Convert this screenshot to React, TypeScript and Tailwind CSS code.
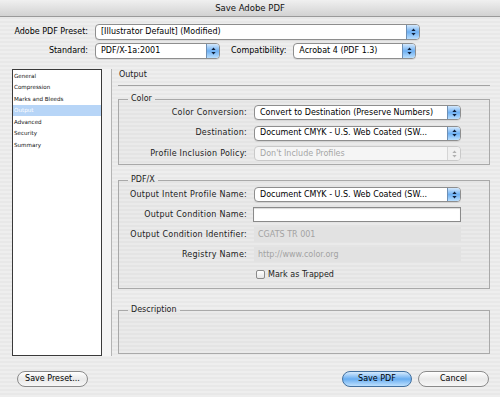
import React from 'react';

function Arrows({ muted }: { muted?: boolean }) {
  return (
    <svg width="5" height="8" viewBox="0 0 5 8" className={muted ? 'text-[#b0b0b0]' : 'text-[#10203a]'}>
      <path d="M2.5 0.5 L4.6 3 L0.4 3 Z" fill="currentColor" />
      <path d="M2.5 7.5 L4.6 5 L0.4 5 Z" fill="currentColor" />
    </svg>
  );
}

function Select({ value, className, disabled }: { value: string; className: string; disabled?: boolean }) {
  return (
    <div
      className={`flex items-stretch rounded-[4px] border ${
        disabled ? 'border-[#c9c9c9] bg-[#f5f5f5] text-[#a6a6a6]' : 'border-[#8e8e8e] bg-white text-black shadow-[0_1px_0_rgba(0,0,0,0.08)]'
      } ${className}`}
    >
      <span className="flex-1 truncate pl-[5px] flex items-center">{value}</span>
      <span
        className={`flex w-[13px] items-center justify-center rounded-r-[3px] border-l ${
          disabled
            ? 'border-[#d5d5d5] bg-[#f0f0f0]'
            : 'border-[#6e8fb4] bg-gradient-to-b from-[#d3e8fc] via-[#6eb0f2] to-[#b9defd]'
        }`}
      >
        <Arrows muted={disabled} />
      </span>
    </div>
  );
}

function Row({ label, children }: { label: string; children: React.ReactNode }) {
  return (
    <div className="flex h-[15px] items-center">
      <div className="w-[128px] text-right tracking-[0.25px] text-[#222]">{label}</div>
      <div className="ml-[7px] flex h-full items-stretch">{children}</div>
    </div>
  );
}

function Group({ title, children, className }: { title: string; children?: React.ReactNode; className: string }) {
  return (
    <fieldset className={`border border-[#a9a9a9] bg-black/[0.015] ${className}`}>
      <legend className="ml-[9px] px-[3px] leading-[10px] text-[#222]">{title}</legend>
      {children}
    </fieldset>
  );
}

const items = ['General', 'Compression', 'Marks and Bleeds', 'Output', 'Advanced', 'Security', 'Summary'];

export default function App() {
  return (
    <div className="flex h-[397px] w-[500px] flex-col overflow-hidden bg-[repeating-linear-gradient(0deg,#eeeeee_0px,#eeeeee_2px,#e8e8e8_2px,#e8e8e8_4px)] font-['DejaVu_Sans',sans-serif] text-[8px] text-black">
      {/* title bar */}
      <div className="flex h-[17px] items-center justify-center border-b border-[#9a9a9a] bg-gradient-to-b from-[#f0f0f0] to-[#d2d2d2] text-[8.5px] text-[#111]">
        Save Adobe PDF
      </div>

      {/* preset rows */}
      <div className="mt-[7px] flex h-[16px] items-center">
        <div className="w-[88px] text-right">Adobe PDF Preset:</div>
        <Select value="[Illustrator Default] (Modified)" className="ml-[7px] h-full w-[325px]" />
      </div>
      <div className="mt-[3px] flex h-[16px] items-center">
        <div className="w-[88px] text-right">Standard:</div>
        <Select value="PDF/X-1a:2001" className="ml-[7px] h-full w-[125px]" />
        <div className="ml-[11px]">Compatibility:</div>
        <Select value="Acrobat 4 (PDF 1.3)" className="ml-[7px] h-full w-[123px]" />
      </div>

      {/* body */}
      <div className="mt-[10px] flex h-[287px] pl-[12px]">
        <div className="flex">
          <div className="w-[90px] border border-[#3a3a3a] bg-white text-[5.6px] text-[#111]">
            {items.map((it) => (
              <div
                key={it}
                className={`flex h-[11.5px] items-center pl-[1px] ${it === 'Output' ? 'bg-[#b7d5f7] text-white' : ''}`}
              >
                {it}
              </div>
            ))}
          </div>
          <div className="w-[10px] border-r border-[#b4b4b4] bg-[#f4f4f4]" />
        </div>

        <div className="ml-[6px] flex w-[372px] flex-col">
          <div className="h-[11px] pl-[1px] leading-[11px] text-[#222]">Output</div>
          <div className="mt-[5px] h-px bg-[#a3a3a3]" />

          <Group title="Color" className="mt-[8px] pb-[3px]">
            <div className="flex flex-col gap-[5.5px] pt-[1px]">
              <Row label="Color Conversion:">
                <Select value="Convert to Destination (Preserve Numbers)" className="w-[207px]" />
              </Row>
              <Row label="Destination:">
                <Select value="Document CMYK - U.S. Web Coated (SW..." className="w-[207px]" />
              </Row>
              <Row label="Profile Inclusion Policy:">
                <Select value="Don't Include Profiles" className="w-[207px]" disabled />
              </Row>
            </div>
          </Group>

          <Group title="PDF/X" className="mt-[10px] pb-[6px]">
            <div className="flex flex-col gap-[5px] pt-[2px]">
              <Row label="Output Intent Profile Name:">
                <Select value="Document CMYK - U.S. Web Coated (SW..." className="w-[207px]" />
              </Row>
              <Row label="Output Condition Name:">
                <div className="-ml-px w-[208px] border border-[#8a8a8a] bg-white shadow-[inset_0_1px_1px_rgba(0,0,0,0.15)]" />
              </Row>
              <Row label="Output Condition Identifier:">
                <div className="flex w-[207px] items-center bg-[#e2e2e2] pl-[4px] text-[#a3a3a3]">CGATS TR 001</div>
              </Row>
              <Row label="Registry Name:">
                <div className="flex w-[207px] items-center bg-[#e2e2e2] pl-[4px] text-[#a3a3a3]">http://www.color.org</div>
              </Row>
              <div className="flex h-[15px] items-center pl-[137px]">
                <span className="h-[9px] w-[9px] rounded-[2px] border border-[#8a8a8a] bg-gradient-to-b from-white to-[#e6e6e6]" />
                <span className="ml-[3px] text-[#222]">Mark as Trapped</span>
              </div>
            </div>
          </Group>

          <Group title="Description" className="mt-[16px] h-[49px]" />
        </div>
      </div>

      {/* buttons */}
      <div className="mt-[15px] flex h-[16px] items-stretch pl-[17px]">
        <button className="w-[71px] rounded-full border border-[#8a8a8a] bg-gradient-to-b from-white via-[#e9e9e9] to-[#f7f7f7] text-[8px] text-black">
          Save Preset...
        </button>
        <button className="ml-[254px] w-[70px] rounded-full border border-[#42709f] bg-gradient-to-b from-[#d6ebfd] via-[#68adf0] to-[#bde0fd] text-[8px] text-black">
          Save PDF
        </button>
        <button className="ml-[6px] w-[71px] rounded-full border border-[#8a8a8a] bg-gradient-to-b from-white via-[#e9e9e9] to-[#f7f7f7] text-[8px] text-black">
          Cancel
        </button>
      </div>
    </div>
  );
}
